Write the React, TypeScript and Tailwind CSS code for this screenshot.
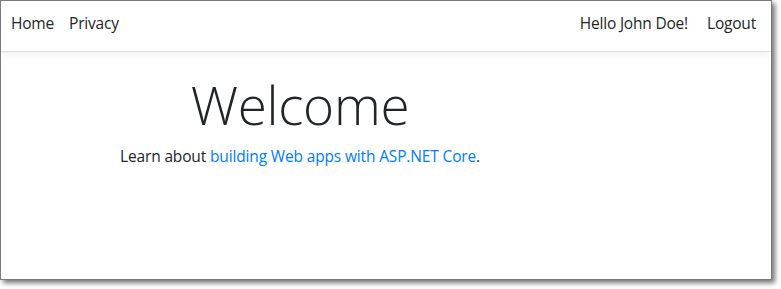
const App = () => {
    return (
        <div className="w-[781px] h-[289px] bg-white font-['Open_Sans',sans-serif] text-[#212529]">
            <div className="w-[772px] h-[280px] border border-[#7a7a7a] bg-white shadow-[3px_3px_5px_rgba(0,0,0,0.55)] overflow-hidden flex flex-col">
                <nav className="h-[51px] shrink-0 flex items-center justify-between pl-[10px] pr-[15px] pb-[4px] border-b border-[#dee2e6] shadow-[0_4px_8px_rgba(0,0,0,0.05)]">
                    <ul className="flex items-center text-[15.5px] tracking-[-0.2px] gap-[15px]">
                        <li>Home</li>
                        <li>Privacy</li>
                    </ul>
                    <ul className="flex items-center text-[15.5px] tracking-[-0.2px] gap-[19px]">
                        <li>Hello John Doe!</li>
                        <li>Logout</li>
                    </ul>
                </nav>
                <main className="w-[598px] text-center pt-[21px]">
                    <h1 className="text-[53px] font-light leading-[1.2] tracking-[-0.3px]">Welcome</h1>
                    <p className="text-[15.5px] leading-[24px] mt-[7px] tracking-[-0.15px]">
                        Learn about <a className="text-[#007bff]">building Web apps with ASP.NET Core</a>.
                    </p>
                </main>
            </div>
        </div>
    );
};

export default App;
